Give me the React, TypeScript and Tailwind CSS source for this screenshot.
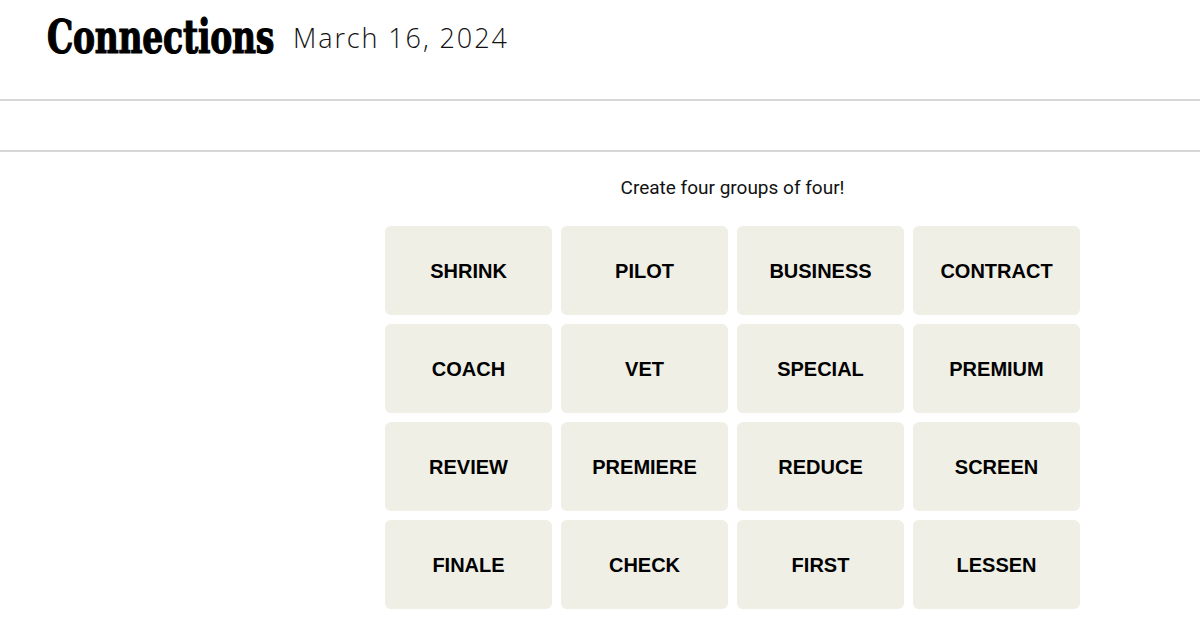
const words = [
  'SHRINK', 'PILOT', 'BUSINESS', 'CONTRACT',
  'COACH', 'VET', 'SPECIAL', 'PREMIUM',
  'REVIEW', 'PREMIERE', 'REDUCE', 'SCREEN',
  'FINALE', 'CHECK', 'FIRST', 'LESSEN',
]

export default function App() {
  return (
    <div className="min-h-screen bg-white text-black" style={{ fontFamily: '"Liberation Sans", Arial, sans-serif' }}>
      {/* header */}
      <header className="h-[101px] border-b-2 border-[#d6d6d6] px-[47px] pt-[4px] flex items-center gap-5 pb-[31px]">
        <div className="w-[226px] shrink-0">
          <h1
            className="origin-left scale-x-[0.78] whitespace-nowrap text-[47px] font-bold leading-none tracking-[-0.3px] [-webkit-text-stroke:1.2px_black]"
            style={{ fontFamily: '"DejaVu Serif Condensed", "DejaVu Serif", serif' }}
          >
            Connections
          </h1>
        </div>
        <span
          className="mt-[2px] text-[27px] font-light leading-none tracking-[1.9px] text-[#121212]"
          style={{ fontFamily: '"Open Sans", sans-serif' }}
        >
          March 16, 2024
        </span>
      </header>

      {/* toolbar band */}
      <div className="h-[51px] border-b-2 border-[#d6d6d6]" />

      {/* game */}
      <main className="pl-[385px] pt-[22px]">
        <div className="w-[695px]">
          <p className="text-center text-[19px] leading-[28px] text-[#121212]" style={{ fontFamily: '"Roboto", sans-serif' }}>
            Create four groups of four!
          </p>
          <div className="mt-[24px] grid grid-cols-4 gap-[9px]">
            {words.map((w) => (
              <button
                key={w}
                className="h-[89px] rounded-md bg-[#efefe6] text-[20px] font-bold uppercase text-black"
              >
                {w}
              </button>
            ))}
          </div>
        </div>
      </main>
    </div>
  )
}
